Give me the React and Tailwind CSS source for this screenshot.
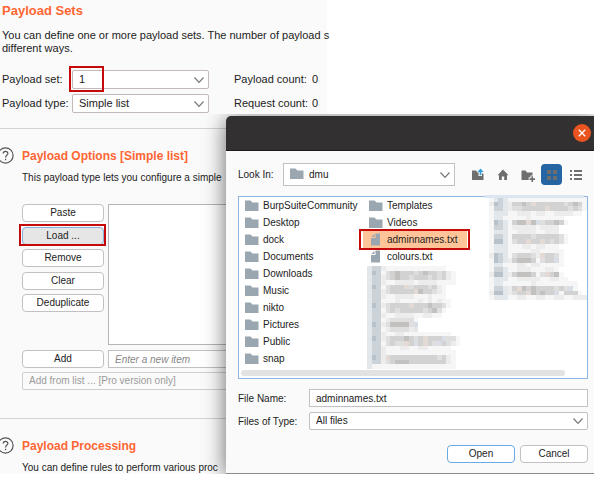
import React from "react";

const folders = ["BurpSuiteCommunity", "Desktop", "dock", "Documents", "Downloads", "Music", "nikto", "Pictures", "Public", "snap"];

const shades = {
  1: "#f6f6f6", 2: "#ececec", 3: "#dfdfdf", 4: "#d2d2d2", 5: "#c2c1c0",
  a: "#e1e7ea", b: "#cbd3d9", c: "#b7c2ca", w: "#e3dad5", v: "#d9dde6",
};

const middleBlocks = [
  "abb21111111111111",
  "acb1345444345443421",
  "abb2345443444343421",
  "abb2112222122221111",
  "acb13444w34443421",
  "abb2344444w544321",
  "abb21122221112111",
  "abb111211112121211",
  "acb234444w44454431",
  "abb13434444434531",
  "abb2112222112211",
  "abb12333331",
  "acb2355553v",
  "abb1233332a",
  "abb211221111111111",
  "acb234445434w444v331",
  "abb13433w4v4w43v4321",
  "abb211122112211111",
  "abb2111111111111111",
  "acb2w44444444443421",
  "abb2345554444444421",
  "a111111111111111111",
];

const rightBlocks = [
  "1aba11111111111111111",
  "2cba24454w44444434541",
  "1bba23344444w44443431",
  "1aaa1122212211222211",
  "1aa1111121111111",
  "1cba1455w5v344541",
  "1bba12222212222",
  "1aaa11222211222",
  "1bba1444434444431",
  "1cca1344w44w43431",
  "1aaa11122122111",
  "1aaa111112211111",
  "2cba1344432w4431",
  "1cba2455541344v1",
  "1aa1112212211111",
  "1bba11222111221",
  "2cca24555413w451",
  "1aaa1122222112211",
  "1aa1111112111111111",
  "1bba24w5454444343v1",
  "2cca2344w54544v14441",
  "1aaa11221122112211222",
];

const Mosaic = ({ rows, columns }) => (
  <svg className="block h-[103px] w-[98px]" viewBox={`0 0 ${columns} ${rows.length}`} preserveAspectRatio="none" shapeRendering="crispEdges" aria-hidden="true">
    {rows.map((row, y) => [...row].map((c, x) => <rect key={x + "-" + y} x={x} y={y} width="1" height="1" fill={shades[c]} />))}
  </svg>
);

const Chevron = () => (
  <svg className="pointer-events-none absolute right-1 top-1/2 h-3 w-3 -translate-y-1/2" viewBox="0 0 12 12" fill="none" stroke="#777" strokeWidth="1.2">
    <path d="M1.500 3.500 L6 8.300 L10.500 3.500" />
  </svg>
);

const Folder = () => (
  <svg className="h-3 w-[14px] shrink-0" viewBox="0 0 14 12" fill="#9aa7b0">
    <path d="M0 0.500 H5.500 L7.500 2.500 H13.500 V11 H0 Z" />
  </svg>
);

const FileIcon = () => (
  <svg className="h-[13px] w-[14px] shrink-0" viewBox="0 0 14 13" fill="#9aa7b0">
    <path d="M6.500 0.500 H11 V12.500 H2 V5 H6.500 Z M2.300 4 L5.500 0.800 V4 Z" />
  </svg>
);

const Help = () => (
  <svg className="-ml-[3px] h-[17px] w-[17px] shrink-0" viewBox="0 0 17 17" fill="none" stroke="#555" strokeWidth="1.200">
    <circle cx="8.500" cy="8.500" r="7.600" />
    <path d="M6.200 6.600 C6.200 3.600 11 3.700 10.900 6.500 C10.800 8.200 8.600 8.200 8.600 10.500 M8.600 11.800 V13.200" />
  </svg>
);

const Highlight = ({ className }) => <span className={"pointer-events-none absolute border-2 border-[#c60a0a] " + className} />;

const SideButton = ({ children, active }) => (
  <button className={"block h-[18px] w-[82px] rounded-[4px] border text-center leading-[16px] " + (active ? "border-[#87afda] bg-[#e6e6e6]" : "border-[#c2c0c2] bg-white")}>
    {children}
  </button>
);

const SectionTitle = ({ children }) => (
  <div className="flex items-center gap-2">
    <Help />
    <h2 className="text-[12px] font-bold leading-[16px] text-[#ff6633]">{children}</h2>
  </div>
);

const PayloadSelect = ({ id, value, children }) => (
  <div className="relative">
    <select id={id} className="block h-[19px] w-full appearance-none rounded-[2px] border border-[#c2b9bb] bg-white pl-[6px] leading-[17px]">
      <option>{value}</option>
    </select>
    <Chevron />
    {children}
  </div>
);

const FileDialog = () => (
  <div role="dialog" aria-label="Open file" className="absolute bottom-0 left-[226px] right-0 top-[2px] rounded-tl-[5px] border-b border-[#8a8a8a] bg-[#fafafa] shadow-[0_3px_22px_rgba(0,0,0,0.6)]">
    <div className="flex h-[35px] items-center justify-end rounded-tl-[5px] border-b border-[#1d1b1c] bg-[#333031] pr-[3px]">
      <button aria-label="Close" className="flex h-[18px] w-[18px] items-center justify-center rounded-full bg-[#e95420]">
        <svg className="h-2 w-2" viewBox="0 0 8 8" stroke="#fff" strokeWidth="1.300"><path d="M0.800 0.800 L7.200 7.200 M7.200 0.800 L0.800 7.200" /></svg>
      </button>
    </div>
    <div className="pl-3 pr-[6px] pt-3">
      <div className="flex h-[23px] items-center">
        <label htmlFor="look" className="w-[45px]">Look In:</label>
        <div className="relative h-full flex-1">
          <select id="look" className="block h-full w-full appearance-none border border-[#c2c0c2] bg-white pl-[25px]">
            <option>dmu</option>
          </select>
          <span className="pointer-events-none absolute left-[7px] top-[5px] block"><Folder /></span>
          <Chevron />
        </div>
        <div className="ml-4 flex items-center gap-[11px]">
          <button aria-label="Up one level">
            <svg className="block h-[14px] w-[14px]" viewBox="0 0 14 14">
              <path fill="#6e6e6e" d="M1 2.500 H5 L6.500 4.500 H7.500 V8 H11 V5.500 H12.500 V12 H1 Z" />
              <path fill="#389fd6" d="M9.500 0.500 L12.700 4 H10.400 V7.200 H8.600 V4 H6.300 Z" />
            </svg>
          </button>
          <button aria-label="Home">
            <svg className="block h-[14px] w-[14px]" viewBox="0 0 14 14" fill="#6e6e6e">
              <path d="M7 1.500 L12.500 7.200 H11 V12 H8.200 V8.500 H5.800 V12 H3 V7.200 H1.500 Z" />
            </svg>
          </button>
          <button aria-label="New folder">
            <svg className="block h-[14px] w-[14px]" viewBox="0 0 14 14" fill="#6e6e6e">
              <path d="M0.500 2.500 H4.500 L6 4.500 H11.500 V7.500 H9.500 V9.300 H7.700 V12 H0.500 Z M10.400 8.300 H12 V10.300 H14 V11.900 H12 V13.900 H10.400 V11.900 H8.500 V10.300 H10.400 Z" />
            </svg>
          </button>
        </div>
        <button aria-label="List view" className="ml-[6px] flex h-[21px] w-[21px] items-center justify-center rounded-[4px] bg-[#2565a3]">
          <svg className="h-[10px] w-[10px]" viewBox="0 0 10 10" fill="#6e6e6e"><path d="M0 0 H4 V4 H0 Z M6 0 H10 V4 H6 Z M0 6 H4 V10 H0 Z M6 6 H10 V10 H6 Z" /></svg>
        </button>
        <button aria-label="Details view" className="ml-[7px] mr-[5px]">
          <svg className="block h-[14px] w-[14px]" viewBox="0 0 14 14" fill="#6e6e6e"><path d="M1 2 H3 V4 H1 Z M5 2 H13 V4 H5 Z M1 6 H3 V8 H1 Z M5 6 H13 V8 H5 Z M1 10 H3 V12 H1 Z M5 10 H13 V12 H5 Z" /></svg>
        </button>
      </div>

      <div className="relative mt-[10px] border border-[#8fb6e2] bg-white pb-[2px] leading-[17px]">
        <div className="grid grid-cols-[122px_122px_1fr]">
          <ul className="pl-[6px]">
            {folders.map((f) => <li key={f} className="flex h-[17px] items-center gap-1"><Folder />{f}</li>)}
          </ul>
          <ul className="pl-[2px]">
            <li className="flex h-[17px] items-center gap-1 pl-[6px]"><Folder />Templates</li>
            <li className="flex h-[17px] items-center gap-1 pl-[6px]"><Folder />Videos</li>
            <li className="relative flex h-[17px] w-[104px] items-center gap-1 bg-[#ffc599] pl-[6px]">
              <FileIcon />adminnames.txt
              <Highlight className="-left-1 -right-[3px] -top-[2px] -bottom-[2px]" />
            </li>
            <li className="flex h-[17px] items-center gap-1 pl-[6px]"><FileIcon />colours.txt</li>
            <li className="pl-1 pt-[1px]"><Mosaic rows={middleBlocks} columns={21} /></li>
          </ul>
          <div className="pl-[6px]"><Mosaic rows={rightBlocks} columns={21} /></div>
        </div>
        <span className="absolute -top-[2px] right-[3px] h-[3px] w-[100px] bg-[#dce6f1]" />
        <div className="ml-[2px] mr-[22px] mt-[1px] h-[6px] rounded-full bg-[#e2e2e2]" />
      </div>

      <div className="mt-[10px] grid grid-cols-[71px_1fr] items-center gap-y-[5px]">
        <label htmlFor="name">File Name:</label>
        <input id="name" defaultValue="adminnames.txt" className="block h-[18px] w-full border border-[#c2c0c2] bg-white px-[6px]" />
        <label htmlFor="kind">Files of Type:</label>
        <div className="relative">
          <select id="kind" className="block h-[18px] w-full appearance-none rounded-[2px] border border-[#c2c0c2] bg-white pl-[6px] leading-[16px]">
            <option>All files</option>
          </select>
          <Chevron />
        </div>
      </div>
      <div className="mt-[15px] flex justify-end gap-[5px]">
        <button className="h-[18px] w-[68px] rounded-[4px] border border-[#69aae6] bg-white leading-[16px]">Open</button>
        <button className="h-[18px] w-[68px] rounded-[4px] border border-[#c2c0c2] bg-white leading-[16px]">Cancel</button>
      </div>
    </div>
  </div>
);

export default function App() {
  return (
    <main className="min-h-screen bg-white font-['Liberation_Sans',Arial,sans-serif] text-[11px] text-[#222]">
      <section className="h-[114px] w-[327px] bg-[#fafafa] pl-[2px] pt-[3px]">
        <h2 className="text-[13px] font-bold leading-[16px] text-[#ff6633]">Payload Sets</h2>
        <p className="mt-[10px] whitespace-nowrap leading-[13px]">
          You can define one or more payload sets. The number of payload s<br />different ways.
        </p>
        <div className="mt-[15px] grid grid-cols-[70px_137px_25px_78px_auto] gap-y-[5px] leading-[19px]">
          <label htmlFor="set">Payload set:</label>
          <PayloadSelect id="set" value="1">
            <Highlight className="-left-[3px] -top-[4px] h-[26px] w-[35px]" />
          </PayloadSelect>
          <span /><span>Payload count:</span><span>0</span>
          <label htmlFor="type">Payload type:</label>
          <PayloadSelect id="type" value="Simple list" />
          <span /><span>Request count:</span><span>0</span>
        </div>
      </section>

      <div className="relative overflow-hidden bg-[#fafafa] pt-[14px] text-[10px]">
        <section className="border-t border-[#d2d2d2] pt-[18px]">
          <SectionTitle>Payload Options [Simple list]</SectionTitle>
          <div className="pl-[22px]">
            <p className="mt-[7px] whitespace-nowrap leading-[14px]">This payload type lets you configure a simple</p>
            <div className="mt-[19px] flex gap-1">
              <div className="flex h-[108px] flex-col justify-between">
                <SideButton>Paste</SideButton>
                <div className="relative">
                  <SideButton active>Load ...</SideButton>
                  <Highlight className="-left-[3px] -top-[3px] h-[22px] w-[87px]" />
                </div>
                <SideButton>Remove</SideButton>
                <SideButton>Clear</SideButton>
                <SideButton>Deduplicate</SideButton>
              </div>
              <div className="h-[141px] flex-1 border border-[#b6b4b6] bg-white" />
            </div>
            <div className="mt-[5px] flex gap-1">
              <SideButton>Add</SideButton>
              <input aria-label="New item" placeholder="Enter a new item" className="h-[18px] flex-1 border border-[#c2c0c2] bg-white px-[6px] italic placeholder:text-[#888]" />
            </div>
            <select aria-label="Add from list" disabled className="mt-1 block h-[18px] w-full appearance-none rounded-[2px] border border-[#d0ced0] bg-[#fafafa] pl-[6px] leading-[16px] text-[#9a9a9a] opacity-100">
              <option>Add from list ... [Pro version only]</option>
            </select>
          </div>
        </section>
        <section className="mt-7 border-t border-[#d2d2d2] pt-[18px]">
          <SectionTitle>Payload Processing</SectionTitle>
          <p className="mt-2 whitespace-nowrap pl-[22px] leading-[12px]">You can define rules to perform various proc</p>
        </section>
        <FileDialog />
      </div>
    </main>
  );
}
